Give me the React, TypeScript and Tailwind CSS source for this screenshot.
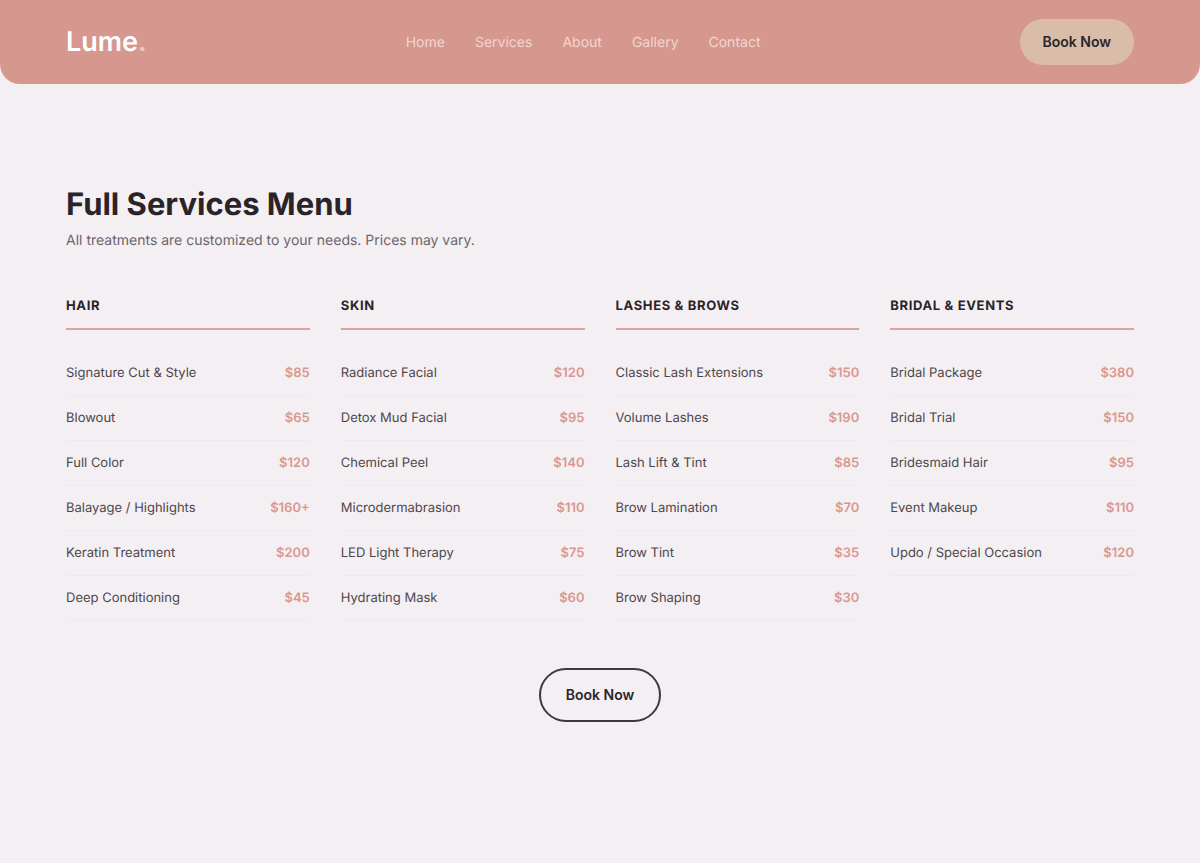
const links = ["Home", "Services", "About", "Gallery", "Contact"];

interface Service {
  name: string;
  price: string;
}

interface Category {
  title: string;
  services: Service[];
}

const categories: Category[] = [
  {
    title: "Hair",
    services: [
      { name: "Signature Cut & Style", price: "$85" },
      { name: "Blowout", price: "$65" },
      { name: "Full Color", price: "$120" },
      { name: "Balayage / Highlights", price: "$160+" },
      { name: "Keratin Treatment", price: "$200" },
      { name: "Deep Conditioning", price: "$45" },
    ],
  },
  {
    title: "Skin",
    services: [
      { name: "Radiance Facial", price: "$120" },
      { name: "Detox Mud Facial", price: "$95" },
      { name: "Chemical Peel", price: "$140" },
      { name: "Microdermabrasion", price: "$110" },
      { name: "LED Light Therapy", price: "$75" },
      { name: "Hydrating Mask", price: "$60" },
    ],
  },
  {
    title: "Lashes & Brows",
    services: [
      { name: "Classic Lash Extensions", price: "$150" },
      { name: "Volume Lashes", price: "$190" },
      { name: "Lash Lift & Tint", price: "$85" },
      { name: "Brow Lamination", price: "$70" },
      { name: "Brow Tint", price: "$35" },
      { name: "Brow Shaping", price: "$30" },
    ],
  },
  {
    title: "Bridal & Events",
    services: [
      { name: "Bridal Package", price: "$380" },
      { name: "Bridal Trial", price: "$150" },
      { name: "Bridesmaid Hair", price: "$95" },
      { name: "Event Makeup", price: "$110" },
      { name: "Updo / Special Occasion", price: "$120" },
    ],
  },
];

function Header() {
  return (
    <header className="rounded-b-[20px] bg-[#d6988e] px-[66px]">
      <div className="mx-auto flex h-[84px] max-w-[1068px] items-center justify-between">
        <a href="#" className="text-[27px] leading-8 font-semibold text-white">
          Lume<span className="text-[#ecc8bf]">.</span>
        </a>
        <nav className="flex gap-[30px]">
          {links.map((link) => (
            <a key={link} href="#" className="text-[14px] leading-[21px] text-[#f3d5cf]">
              {link}
            </a>
          ))}
        </nav>
        <button className="h-[46px] rounded-full bg-[#d9bda9] px-[23px] text-[14px] leading-5 font-semibold text-[#2a2428]">
          Book Now
        </button>
      </div>
    </header>
  );
}

function ServiceColumn({ category }: { category: Category }) {
  return (
    <section>
      <h2 className="border-b-2 border-[#dba59f] pb-3 text-[13px] leading-5 font-bold tracking-wider uppercase">
        {category.title}
      </h2>
      <ul className="mt-[21px]">
        {category.services.map((service) => (
          <li
            key={service.name}
            className="flex items-center justify-between border-b border-[#eee9ed] py-3 text-[13px] leading-5"
          >
            <span className="text-[#4d474c]">{service.name}</span>
            <span className="font-semibold text-[#d9988e]">{service.price}</span>
          </li>
        ))}
      </ul>
    </section>
  );
}

export default function App() {
  return (
    <div className="min-h-screen bg-[#f4eff3] font-['Inter',sans-serif] text-[#2a2428] [text-rendering:geometricPrecision]">
      <Header />

      <main className="mx-auto max-w-[1200px] px-[66px] py-[101px]">
        <h1 className="text-[31px] leading-10 font-bold">Full Services Menu</h1>
        <p className="mt-1 text-[14px] leading-6 text-[#6c656b]">
          All treatments are customized to your needs. Prices may vary.
        </p>

        <div className="mt-[43px] grid grid-cols-4 gap-[31px]">
          {categories.map((category) => (
            <ServiceColumn key={category.title} category={category} />
          ))}
        </div>

        <div className="mt-[47px] flex justify-center">
          <button className="h-[54px] rounded-full border-2 border-[#3f393d] px-[25px] text-[14px] leading-5 font-semibold">
            Book Now
          </button>
        </div>
      </main>
    </div>
  );
}
